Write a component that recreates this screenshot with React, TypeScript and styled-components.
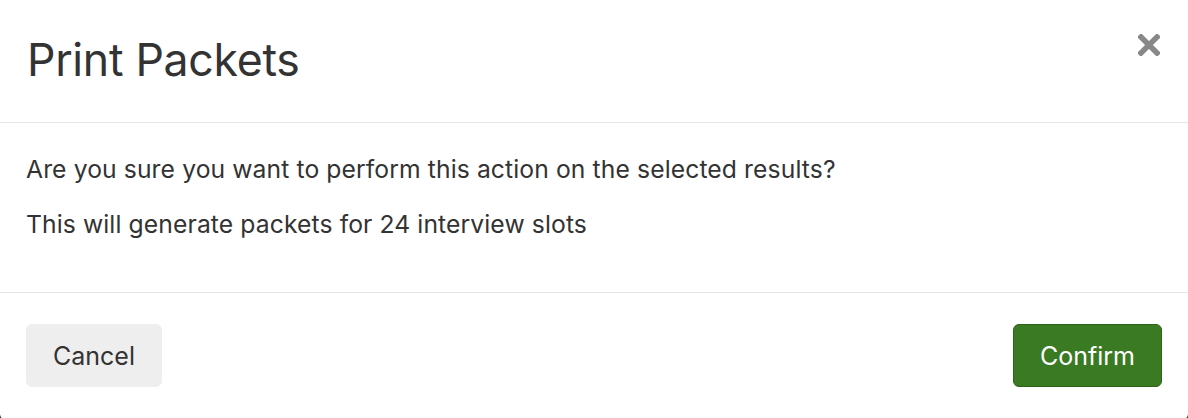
import React from 'react'
import styled, { createGlobalStyle } from 'styled-components'

const GlobalStyle = createGlobalStyle`
    html, body {
        margin: 0;
        padding: 0;
        background: #3a3a3a;
        font-family: Inter, "Liberation Sans", sans-serif;
        color: #333;
    }
`

const Modal = styled.div`
    width: 1188px;
    height: 420px;
    background: #fff;
    border-radius: 0 0 6px 6px;
    display: flex;
    flex-direction: column;
    overflow: hidden;
`

const Header = styled.div`
    height: 123px;
    box-sizing: border-box;
    border-bottom: 1px solid #e5e5e5;
    padding: 0 28px 2px 27px;
    display: flex;
    align-items: center;
    justify-content: space-between;
`

const Title = styled.h1`
    margin: 0;
    font-size: 44.6px;
    font-weight: 400;
    letter-spacing: -0.3px;
    color: #333;
`

const CloseButton = styled.button`
    border: 0;
    background: none;
    padding: 0;
    width: 22px;
    height: 22px;
    margin-top: -30px;
    cursor: pointer;
    display: flex;
`

const Body = styled.div`
    height: 170px;
    box-sizing: border-box;
    border-bottom: 1px solid #e5e5e5;
    padding: 29px 26px 0;
`

const Paragraph = styled.p`
    margin: 0 0 20px;
    font-size: 24.7px;
    letter-spacing: 0.1px;
    line-height: 35px;
`

const Footer = styled.div`
    display: flex;
    justify-content: space-between;
    align-items: flex-start;
    padding: 31px 26px 0;
`

const Button = styled.button<{ $primary?: boolean }>`
    height: 63px;
    box-sizing: border-box;
    padding: 0 26px;
    border-radius: 6px;
    font-family: inherit;
    font-size: 25px;
    border: 1px solid ${(p) => (p.$primary ? '#2c6219' : '#eee')};
    background: ${(p) => (p.$primary ? '#3a7a22' : '#eee')};
    color: ${(p) => (p.$primary ? '#fff' : '#333')};
`

export default function App() {
    return (
        <>
            <GlobalStyle />
            <Modal>
                <Header>
                    <Title>Print Packets</Title>
                    <CloseButton aria-label="Close">
                        <svg width="22" height="22" viewBox="0 0 22 22">
                            <path
                                d="M3 3 L19 19 M19 3 L3 19"
                                stroke="#888"
                                strokeWidth="5.5"
                                strokeLinecap="square"
                            />
                        </svg>
                    </CloseButton>
                </Header>
                <Body>
                    <Paragraph>
                        Are you sure you want to perform this action on the
                        selected results?
                    </Paragraph>
                    <Paragraph>
                        This will generate packets for 24 interview slots
                    </Paragraph>
                </Body>
                <Footer>
                    <Button>Cancel</Button>
                    <Button $primary>Confirm</Button>
                </Footer>
            </Modal>
        </>
    )
}
